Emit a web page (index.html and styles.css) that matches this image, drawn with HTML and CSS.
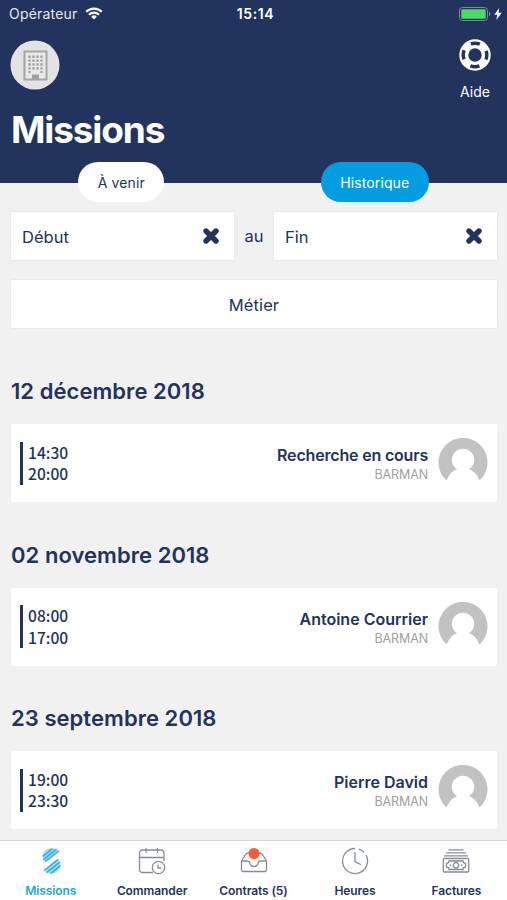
FILE: index.html
```html
<!DOCTYPE html>
<html lang="fr">
<head>
  <meta charset="UTF-8">
  <meta name="viewport" content="width=device-width, initial-scale=1.0">
  <title>Missions</title>
  <link rel="stylesheet" href="styles.css">
</head>
<body>
  <div class="app">
    <header class="header">
      <div class="status">
        <div class="carrier">
          <span>Opérateur</span>
          <svg width="18" height="13" viewBox="0 0 18 13" fill="none" stroke="#fff" stroke-width="2.2">
            <path d="M1.2 4.8a11 11 0 0 1 15.6 0M4 7.8a7 7 0 0 1 10 0"/>
            <path d="M9 12.5L6.2 9.7a4 4 0 0 1 5.6 0z" fill="#fff" stroke="none"/>
          </svg>
        </div>
        <div class="clock">15:14</div>
        <div class="battery">
          <svg width="32" height="14" viewBox="0 0 32 14">
            <rect x=".5" y=".5" width="28" height="13" rx="3" fill="none" stroke="#7d88a1"/>
            <rect x="2.3" y="2.3" width="24.4" height="9.4" rx="1.2" fill="#4cd964"/>
            <path d="M30 5v4q1.5-.5 1.5-2t-1.5-2z" fill="#7d88a1"/>
          </svg>
          <svg width="8" height="12" viewBox="0 0 8 12"><path d="M5.2 0L.3 6.7h3L2.3 12 7.7 4.8H4.5z" fill="#fff"/></svg>
        </div>
      </div>

      <div class="top">
        <svg class="company" width="50" height="50" viewBox="0 0 50 50">
          <circle cx="25" cy="25" r="24.5" fill="#e3e3e3"/>
          <rect x="14.5" y="11.5" width="22" height="28" fill="#e9e9e9" stroke="#a6a6a6" stroke-width="2"/>
          <path d="M19.5 15.5v17.5M23.5 15.5v15M27.5 15.5v15M31.5 15.5v17.5" stroke="#a0a0a0" stroke-width="2.3" stroke-dasharray="2.4 1.5"/>
          <path d="M22 34.5h7v5h-7z" fill="#a0a0a0"/>
        </svg>
        <div class="help">
          <svg width="32" height="32" viewBox="0 0 32 32" fill="none">
            <circle cx="16" cy="16" r="11.2" stroke="#fff" stroke-width="9"/>
            <circle cx="16" cy="16" r="11.8" stroke="#22335d" stroke-width="3.4" stroke-dasharray="9.2 9.335" stroke-dashoffset="4.6"/>
          </svg>
          <span>Aide</span>
        </div>
      </div>
      <h1>Missions</h1>
      <div class="tabs">
        <a class="tab">À venir</a>
        <a class="tab on">Historique</a>
      </div>
    </header>

    <main>
      <div class="filters">
        <div class="field">
          <span>Début</span>
          <svg width="16" height="16" viewBox="0 0 16 16"><path d="M3 3l10 10M13 3L3 13" stroke="#22335d" stroke-width="5.4" stroke-linecap="round"/></svg>
        </div>
        <span class="au">au</span>
        <div class="field">
          <span>Fin</span>
          <svg width="16" height="16" viewBox="0 0 16 16"><path d="M3 3l10 10M13 3L3 13" stroke="#22335d" stroke-width="5.4" stroke-linecap="round"/></svg>
        </div>
      </div>
      <div class="field job"><span>Métier</span></div>

      <section>
        <h2>12 décembre 2018</h2>
        <div class="card">
          <div class="hours"><div>14:30</div><div>20:00</div></div>
          <div class="who">
            <div class="name recherche">Recherche en cours</div>
            <div class="role">BARMAN</div>
          </div>
          <svg class="avatar" width="50" height="50" viewBox="0 0 50 50">
            <path d="M8.5 42.5A24.5 24.5 0 1 1 41.5 42.5Q38 33.5 31 31.3A11.2 11.2 0 1 0 19 31.3Q12 33.5 8.5 42.5z" fill="#c2c2c2"/>
          </svg>
        </div>
      </section>

      <section>
        <h2>02 novembre 2018</h2>
        <div class="card">
          <div class="hours"><div>08:00</div><div>17:00</div></div>
          <div class="who">
            <div class="name">Antoine Courrier</div>
            <div class="role">BARMAN</div>
          </div>
          <svg class="avatar" width="50" height="50" viewBox="0 0 50 50">
            <path d="M8.5 42.5A24.5 24.5 0 1 1 41.5 42.5Q38 33.5 31 31.3A11.2 11.2 0 1 0 19 31.3Q12 33.5 8.5 42.5z" fill="#c2c2c2"/>
          </svg>
        </div>
      </section>

      <section>
        <h2>23 septembre 2018</h2>
        <div class="card">
          <div class="hours"><div>19:00</div><div>23:30</div></div>
          <div class="who">
            <div class="name">Pierre David</div>
            <div class="role">BARMAN</div>
          </div>
          <svg class="avatar" width="50" height="50" viewBox="0 0 50 50">
            <path d="M8.5 42.5A24.5 24.5 0 1 1 41.5 42.5Q38 33.5 31 31.3A11.2 11.2 0 1 0 19 31.3Q12 33.5 8.5 42.5z" fill="#c2c2c2"/>
          </svg>
        </div>
      </section>
    </main>

    <nav class="nav">
      <a class="item active">
        <svg width="28" height="28" viewBox="0 0 28 28" fill="#9ad8f1" stroke="#2ba9e1" stroke-width="1.4" stroke-linecap="round">
          <path d="M8 14.5Q4.500 11.500 6 7 8 1.500 14.500 1.300 19.500 1.200 21.500 4.500z" stroke="none"/>
          <path d="M7.500 23L21 12.500Q24.500 16 23.200 20.500 21 26.300 14 26.500 9 26.300 7.500 23z" stroke="none"/>
          <path d="M6.3 9L15 2M6.800 12.500L19 2.500M8.500 14.500L21.500 4.300"/>
          <path d="M7.700 23L20.500 12.700M10 25.300L22.500 15.200M14 26.300L23 19"/>
        </svg>
        <span>Missions</span>
      </a>
      <a class="item">
        <svg width="28" height="28" viewBox="0 0 28 28" fill="none" stroke="#858c98" stroke-width="1.3">
          <path d="M15 25.5H4.500a3 3 0 0 1-3-3V6a3 3 0 0 1 3-3H23a3 3 0 0 1 3 3v8M1.500 10.500H26M8 1v5M19.500 1v5"/>
          <circle cx="20.5" cy="20.5" r="6.2" fill="#fff"/>
          <path d="M20 17.500v3.500h3"/>
        </svg>
        <span>Commander</span>
      </a>
      <a class="item">
        <svg width="28" height="28" viewBox="0 0 28 28" fill="none" stroke="#858c98" stroke-width="1.3" stroke-linejoin="round">
          <path d="M1.500 14L5.500 7.500Q6.500 6 8.500 6h11q2 0 3 1.500L26.500 14v9a1.500 1.500 0 0 1-1.500 1.500H3A1.500 1.500 0 0 1 1.500 23zM1.500 14H8q1.500 0 2 2.500 1 3 4 3t4-3q.5-2.500 2-2.500h6.500"/>
          <circle cx="14" cy="6.5" r="5.5" fill="#ff5a36" stroke="none"/>
        </svg>
        <span>Contrats (5)</span>
      </a>
      <a class="item">
        <svg width="28" height="28" viewBox="0 0 28 28" fill="none" stroke="#858c98" stroke-width="1.3">
          <path d="M14 1.500A12.500 12.500 0 1 0 25 8M18 2.200q3 1 5 3.300M14 5v9.500l6 3.200"/>
        </svg>
        <span>Heures</span>
      </a>
      <a class="item">
        <svg width="28" height="28" viewBox="0 0 28 28" fill="none" stroke="#858c98" stroke-width="1.3">
          <path d="M6.500 2.800h15M4 5.800h20M2 8.800h24"/>
          <rect x="1.3" y="11.5" width="25.4" height="13.5" rx="1"/>
          <path d="M7 14h14q0 2 2.500 2.500v3.500q-2.500.5-2.500 2.500H7q0-2-2.500-2.500v-3.500Q7 16 7 14z"/>
          <circle cx="14" cy="18.3" r="2.7"/>
          <path d="M7.500 18.300h1.600M18.900 18.300h1.600" stroke-width="1.6"/>
        </svg>
        <span>Factures</span>
      </a>
    </nav>
  </div>
</body>
</html>
```
FILE: styles.css
```css
*{margin: 0;padding: 0;box-sizing: border-box;}
body {
  background: #f1f1f1;
  color: #22335d;
  font-family: Inter, "Open Sans", sans-serif;
}
svg {
  display: block;
  flex-shrink: 0;
}
.app {
  width: 507px;
  height: 900px;
  display: flex;
  flex-direction: column;
  overflow: hidden;
}

/* header */
.header {
  height: 183px;
  flex-shrink: 0;
  background: #22335d;
  color: #fff;
}
.status {
  height: 27px;
  padding: 0 5px 0 9px;
  display: grid;
  grid-template-columns: 1fr auto 1fr;
  align-items: center;
  font-size: 14px;
  line-height: 27px;
}
.carrier {
  display: flex;
  align-items: center;
  gap: 7px;
  color: #e4e7ee;
  letter-spacing: 0.2px;
}
.clock {
  font-weight: 600;
  letter-spacing: 0.6px;
}
.battery {
  display: flex;
  justify-content: flex-end;
  align-items: center;
  gap: 3px;
}
.top {
  height: 79px;
  padding: 12px 16px 0 10px;
  display: flex;
  justify-content: space-between;
}
.company {
  margin-top: 1px;
}
.help {
  display: flex;
  flex-direction: column;
  align-items: center;
  font-size: 14px;
  line-height: 18px;
}
.help span {
  margin-top: 12px;
}
h1 {
  height: 56px;
  padding-left: 11px;
  font-size: 37px;
  line-height: 48px;
  letter-spacing: -1.15px;
}
.tabs {
  display: flex;
  justify-content: space-around;
}
.tab {
  height: 40px;
  padding: 0 19.5px;
  border-radius: 20px;
  background: #fff;
  color: #22335d;
  font-size: 14px;
  letter-spacing: 0.1px;
  line-height: 42px;
}
.tab.on {
  background: #049de1;
  color: #fff;
}

/* filters + list */
main {
  flex: 1;
  min-height: 0;
  overflow: hidden;
  padding: 29px 10px 0 11px;
}
.filters {
  display: flex;
  align-items: center;
}
.field {
  flex: 1;
  height: 48px;
  padding: 0 15px 0 11px;
  display: flex;
  justify-content: space-between;
  align-items: center;
  background: #fff;
  box-shadow: 0 0 2px #d8d8d8;
  font-size: 16.5px;
}
.field span {
  padding-top: 1px;
}
.au {
  width: 40px;
  text-align: center;
  font-size: 16.5px;
}
.job {
  margin-top: 20px;
  padding: 0 11px;
  justify-content: center;
  letter-spacing: 0.1px;
}
section {
  height: 163.5px;
}
.job + section {
  margin-top: 32px;
}
h2 {
  height: 64px;
  padding-top: 16px;
  font-size: 22px;
  font-weight: 600;
  line-height: 30px;
  letter-spacing: 0.05px;
}
.card {
  height: 78px;
  padding: 0 9px;
  display: flex;
  align-items: center;
  background: #fff;
  border-radius: 2px;
}
.hours {
  height: 43px;
  padding-left: 5px;
  border-left: 3px solid #22335d;
  font-family: "Noto Sans CJK JP", "Noto Sans", sans-serif;
  font-size: 15.6px;
  font-weight: 500;
  line-height: 21.5px;
}
.hours div {
  height: 21.5px;
  overflow: hidden;
}
.who {
  flex: 1;
  margin-right: 10px;
  padding-top: 3px;
  text-align: right;
}
.name {
  font-size: 16px;
  font-weight: 600;
  line-height: 21px;
}
.recherche {
  letter-spacing: -0.18px;
}
.role {
  color: #a0a0a0;
  font-size: 12.5px;
  letter-spacing: -0.1px;
  line-height: 18px;
}

/* bottom bar */
.nav {
  height: 60px;
  flex-shrink: 0;
  display: flex;
  background: #fff;
  border-top: 1px solid #d5d5d5;
}
.item {
  flex: 1;
  display: flex;
  flex-direction: column;
  align-items: center;
  padding-top: 6px;
  font-size: 12px;
  font-weight: 600;
  line-height: 16px;
}
.item span {
  margin-top: 8px;
  letter-spacing: -0.1px;
}
.active {
  color: #1ea5e0;
}
```
